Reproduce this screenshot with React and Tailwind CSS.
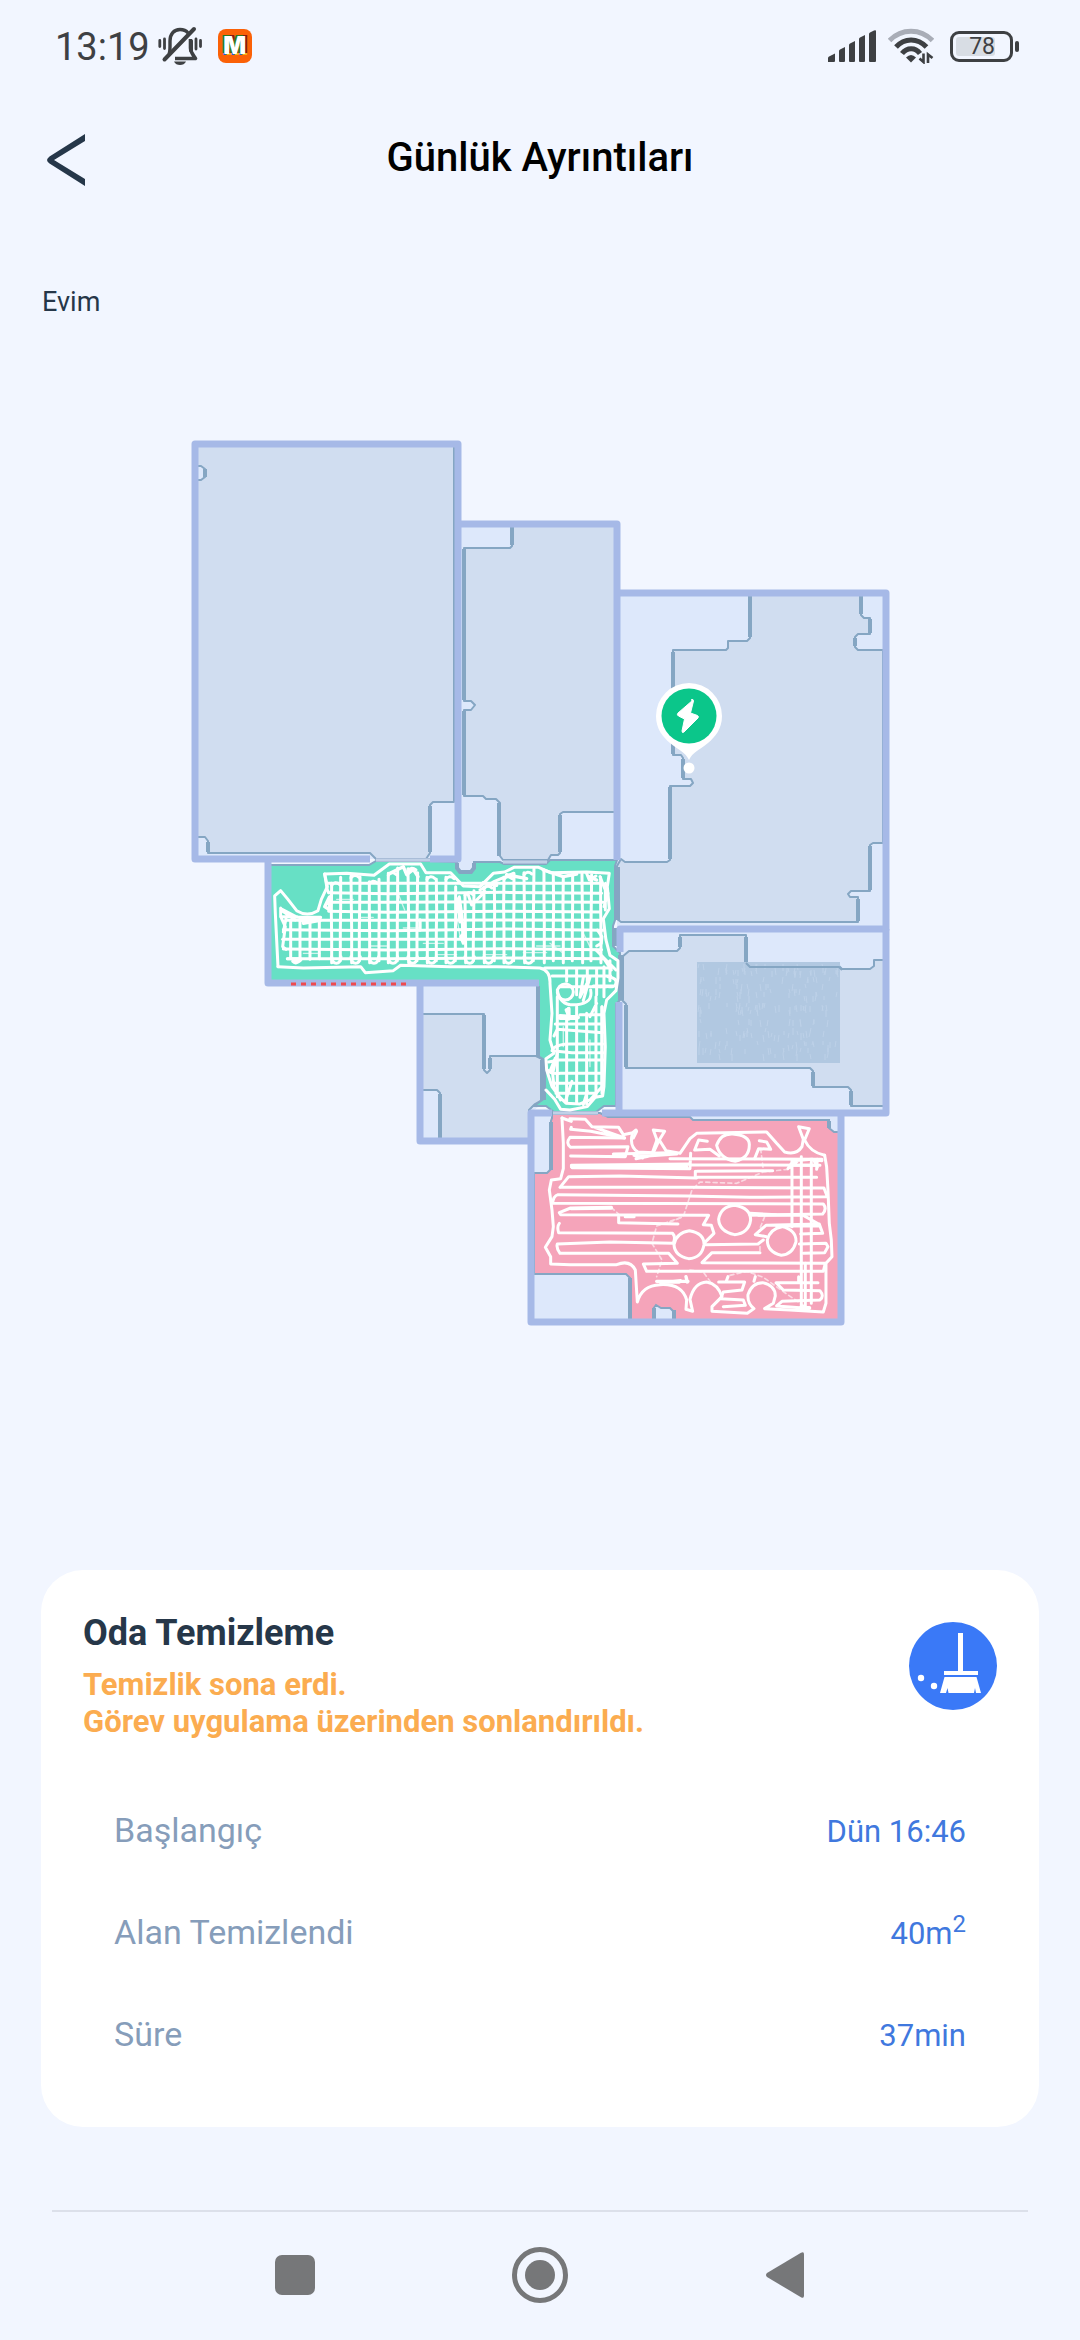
const FONT = 'font-[Roboto,sans-serif]';

const rows = [
  { label: 'Başlangıç', value: 'Dün 16:46' },
  { label: 'Alan Temizlendi', value: '40m', sup: '2' },
  { label: 'Süre', value: '37min' },
];

function MutedBellIcon() {
  return (
    <svg viewBox="0 0 44 40" className="h-10 w-11" fill="none" stroke="#3e4043" aria-hidden="true">
      <path d="M11 28C12 26 12 24 12 20v-5C12 8 16 3.500 22 3.500c4 0 6.500 1.500 8 3.500" strokeWidth="3.400" />
      <path d="M6.500 33.500L36 3" strokeWidth="4" strokeLinecap="round" />
      <path d="M32.500 13v9c0 4 2 6 5 10.500H17" strokeWidth="3.600" strokeLinejoin="round" />
      <path d="M31 15v10l4 5V14z" fill="#3e4043" stroke="none" />
      <path d="M16 35.500h12c-1 2.500-3.500 3.500-6 3.500s-5-1-6-3.500z" fill="#3e4043" stroke="none" />
      <path d="M1.800 14.500v6M6.500 13v9.500M38 13v10M42.500 14.500v6" strokeWidth="2.800" strokeLinecap="round" />
    </svg>
  );
}

function SignalIcon() {
  return (
    <svg viewBox="0 0 48 32" className="h-8 w-12" fill="#3e4043" aria-hidden="true">
      <path d="M0 32v-4q0-1 1-1.500l6-3v7.500q0 1-1 1zM11 31v-10q0-1 1-1.500l5-2.500v14q0 1-1 1h-4q-1 0-1-1zM21 31V15q0-1 1-1.500l5-2.500v20q0 1-1 1h-4q-1 0-1-1zM31 31V9q0-1 1-1.500l5-2.500v26q0 1-1 1h-4q-1 0-1-1zM41 31V4q0-1 1-1.500L46 0.500q2-.8 2 .5v30q0 1-1 1h-5q-1 0-1-1z" />
    </svg>
  );
}

function WifiIcon() {
  return (
    <svg viewBox="0 0 46 36" className="h-9 w-[46px]" fill="none" stroke="#3e4043" strokeWidth="5" aria-hidden="true">
      <path d="M1.500 12.500C13.500 0 32.500 0 44.500 12.500" stroke="#a9adb7" />
      <path d="M8 19C16.500 9.500 29.500 9.500 38.500 19" />
      <path d="M14 25.500c5-6.500 13.500-6.500 18 0" />
      <path d="M18 29.500q5-5 10 0L23 34.500z" fill="#3e4043" stroke="none" />
      <path d="M35.500 25.500v8.500l-4-3.500M40 35v-8.500l4.500 3.500" strokeWidth="2.600" />
    </svg>
  );
}

function StatusBar() {
  return (
    <header className="flex h-[92px] items-center justify-between pr-[61px] pl-[55px] text-[#3e4043]">
      <div className="flex items-center">
        <span className="pt-0.5 text-[38px] leading-[46px]">13:19</span>
        <span className="ml-2">
          <MutedBellIcon />
        </span>
        <span className="ml-4 flex h-[34px] w-[34px] items-center justify-center overflow-hidden rounded-lg bg-[#fb6107] font-[Inter,sans-serif] text-2xl leading-6 font-black text-white [text-shadow:-2px_-1px_0_#2a7a1e,2px_-1px_0_#8c1717,2px_1px_0_#f8b01c,-1px_1px_0_#2b5fc4]">
          M
        </span>
      </div>
      <div className="flex items-center">
        <SignalIcon />
        <span className="ml-3">
          <WifiIcon />
        </span>
        <span className="ml-4 flex h-[31px] w-[63px] items-center rounded-[9px] border-3 border-[#3e4043] p-[3px]">
          <span className="flex h-full w-[39px] items-center justify-end rounded-[3px] bg-[#d8dde4] pt-0.5 text-[23px] leading-5">
            78
          </span>
        </span>
        <span className="ml-0.5 h-[11px] w-1 rounded-sm bg-[#3e4043]" />
      </div>
    </header>
  );
}

const gridX = [245, 272, 303, 330, 358, 387, 415, 443, 474, 503, 531, 559, 588, 617, 645, 672, 702, 733, 762, 792, 822, 852, 882, 910, 940, 968, 996, 1025, 1052];
const gridTop = [130, 112, 108, 110, 125, 118, 100, 84, 86, 98, 112, 118, 112, 140, 160, 152, 140, 128, 112, 100, 98, 86, 90, 105, 112, 104, 102, 104, 112];
const gridY = [130, 158, 187, 214, 241, 269, 298, 327, 356];
const gridLeft = [232, 236, 240, 236, 108, 100, 98, 100, 112];

function GridPath() {
  return (
    <g transform="translate(250 840) scale(.3333)" fill="none" stroke="#fff" strokeWidth="9" strokeLinejoin="round" strokeLinecap="round">
      {gridX.map((x, i) => (
        <path key={x} d={`M${x} ${gridTop[i]}l${(i % 3) - 1} 90l${1 - (i % 2) * 2} 70V${i % 2 ? 362 : 368}`} />
      ))}
      {gridX.filter((_, i) => i % 2 === 0 && i < 22).map((x, i) => (
        <path key={x} d={`M${x} 350q2 20 14 20t14 -20M${x} ${gridTop[i * 2] + 6}q10 -14 24 -2`} />
      ))}
      {gridY.map((y, i) => (
        <path key={y} d={`M${gridLeft[i]} ${y}L420 ${y + (i % 2) * 3}L760 ${y - (i % 3)}L${1050 + (i % 3) * 5} ${y + (i % 2) * 2}`} />
      ))}
      <path d="M122 240V355M150 240V362M180 232V358M208 235V356" />
      <path d="M240 170v40M236 176l4 34l-16 -10l14 -28M150 234h60M152 242h58M160 250l46 -8" strokeWidth="10" />
      <path d="M84 380L76 220L74 168L92 152L112 176L140 212Q172 232 204 212L214 178L232 140L224 102L290 100L372 106L418 72H512L528 98L602 98L640 138L690 140L730 100L764 96L792 82L866 82L902 98L1010 96L1078 100L1072 140L1078 206L1060 236L1068 300L1080 346L1104 362V414L1098 452L1070 480L1062 520L1066 620L1062 740L1058 768L1036 772L1012 800L960 810L932 808L914 778L888 750" />
      <path d="M84 380L160 384L332 380L346 398L430 392L452 376L600 380L740 380L870 384Q902 392 900 430L906 520L900 600L912 640L888 656L890 690L906 740L930 772L948 790L990 792L1020 780L1056 740V500" />
      <path d="M92 204v26l14 30l-8 60l10 8M92 206l50 26h70M92 230h50M108 236l-8 40M96 212l40 28M112 356h40l-24 8q10 12 26 -6" />
      <path d="M224 102L232 150L236 158M628 170l8 60l4 80l-8 -20l10 -12M622 176l8 70M655 165l10 30l40 -40M690 150l40 -24l60 -26" />
      <path d="M1066 130l8 30l-12 40M1050 110l16 40v60M1010 100l8 20l20 -12M1042 270l14 20l-2 20l-14 8M1038 330l60 60M1080 362v60M1058 350l26 40" />
      <path d="M884 384h200M906 408h176M930 440h140M1000 412l-10 60l30 -60l-20 70M950 384v40M980 384v80M1012 384v50M1040 384v80M1062 380v90" />
      <ellipse cx="946" cy="456" rx="24" ry="24" />
      <path d="M922 450Q930 500 980 494Q1030 490 1022 450M1074 410q28 4 24 20t-28 8l-20 2M1030 438h60" />
      <path d="M930 534h50M930 528l54 4M956 506v30M950 510l10 24" strokeWidth="12" />
      <path d="M916 552H1060M912 588l10 -20l136 10M908 626q20 -16 60 -14h90M906 632l60 6h94M896 666l30 -6h134M892 690q10 14 40 10h126M912 730h146M918 760h120" />
      <path d="M922 470V770M950 530V788M980 500V790M1010 520V792M1038 470V770M1056 500v260M1020 530l20 -40M990 524h70" />
      <path d="M922 640l-14 60l4 40l20 40M916 654l-16 40M946 784l20 -60M1000 794l12 -40" />
      <path d="M420 100l40 -20l10 24l20 -16l14 22M700 128l40 8M770 104l60 12M880 90l60 20l40 -8M1016 110l24 10M640 250v54M638 268l8 34M510 240v30" strokeWidth="10" />
      <g strokeWidth="4" opacity=".7">
        <path d="M260 178h50M330 232h40M440 150l24 60M520 310h60M620 230l12 70M700 344h70M820 338h70M900 310l40 30M1000 280l20 40M460 264h50M360 318h50M160 340h50M860 318h70M560 344h60M940 560v60M1020 600v80" />
      </g>
    </g>
  );
}

function LinePath() {
  return (
    <g transform="translate(510 1090) scale(.3333)" fill="none" stroke="#fff" strokeWidth="9" strokeLinejoin="round" strokeLinecap="round">
      <path d="M156 84L160 160V236L152 266L124 270L118 300L126 360L130 410L126 440L106 472L122 500V522L180 524H320Q360 508 376 540L382 636Q396 586 450 584Q516 580 530 630L528 658L548 664L540 628Q552 578 590 576Q624 582 636 620L606 650V664L712 670L732 656Q712 640 714 614Q726 578 758 578Q796 586 796 618L790 640L764 656L840 660L940 666L948 640V520L966 500L964 450L958 400L954 300L950 230L944 196" />
      <path d="M156 84l28 10l-4 -8l46 2l20 22l80 2l14 22l28 -6l10 -8M184 112l-2 6l60 6l102 20l-90 -32M368 128Q356 170 384 186L430 188L444 158L430 120L464 124L448 150L468 182L510 190L540 146L560 130L770 126L800 160L824 186Q860 196 876 170L880 148L866 110L898 116L884 150Q900 186 944 196" />
      <path d="M380 124l-10 20M378 206l70 -14M372 196l26 8M380 200l120 -8M440 152l-12 34" strokeWidth="9" />
      <path d="M344 144L180 142Q166 160 182 172L354 170L346 200L182 198M310 192L480 188M184 226L536 222M186 233L540 236L542 190M480 206L936 208M540 224L920 226M184 230H530" />
      <path d="M556 244V262M560 244L788 242M562 262H920M150 292L176 260L330 258L560 264M152 292L530 292L942 294L952 320L720 322L530 318L144 314Q130 318 128 340L940 342Q952 356 938 372L720 376M304 352L182 354L148 368L152 374L596 376L580 404L604 406L612 430L584 458M326 376V398L504 402M148 400Q140 410 146 428L488 430Q498 440 490 460L300 456L142 462Q138 474 150 490L476 490L502 520L400 522L410 544L940 544L946 520L576 518L606 488H750M586 464L744 462L760 450" />
      <path d="M346 380H372M184 356l120 -2M440 574h94M452 578l60 -6M528 560l4 16M468 576h40" strokeWidth="10" />
      <path d="M620 166Q632 130 668 132Q720 136 718 166Q718 204 676 214Q630 206 620 166zM674 346Q722 354 722 390Q716 430 674 434Q628 424 626 388Q632 350 674 346zM538 422Q584 430 582 464Q576 504 536 506Q494 498 492 464Q498 428 538 422zM816 410Q860 420 858 456Q848 494 814 496Q772 486 772 450Q780 416 816 410z" />
      <path d="M554 180L566 150L592 154M556 180L600 178L628 198M748 152L770 156L782 178L746 176L734 206M720 370L800 374L880 376L926 402L768 406L736 434L770 440M928 402L938 430L872 432M868 462L948 460L954 470L944 488L880 490M746 376H860M800 408H924" />
      <path d="M626 576H704L696 600L640 606L632 626L700 630L706 646L640 650M654 560l-6 16M736 560l-4 14M798 578H924M800 580L820 600L930 602Q944 618 930 630L816 634L800 648L880 654M866 560v16" />
      <path d="M846 210V410M874 200V650M904 216V640M922 208l-2 30M834 236l16 -24l56 -4l30 4M850 226h80M840 232l22 -18M886 520V656M912 212l10 20" />
      <path d="M872 654h26M878 650l16 8" strokeWidth="12" />
      <g strokeWidth="5" strokeDasharray="12 10" opacity=".6">
        <path d="M834 238L760 246L680 280L570 276L546 300L520 380L440 408L426 460L456 510L440 560" />
        <path d="M304 352L330 376M510 384L470 400M540 540L580 546L606 582M660 556L710 544L760 562L830 612L880 646M752 176L760 240M764 380L740 440M750 470v20" />
      </g>
    </g>
  );
}

const rugStreaks = Array.from({ length: 220 }, (_, i) => {
  const x = 699 + ((i * i * 7 + i * 31) % 139);
  const y = 964 + ((i * i * 3 + i * 17) % 91);
  return `M${x} ${y}l${(i % 3) - 1} ${4 + (i % 4)}`;
});

function CleaningMap() {
  return (
    <svg viewBox="180 430 720 910" className="block h-auto w-full" role="img" aria-label="Temizlik haritası">
      <g fill="#dde8fb">
        <path d="M195 444H458V859H195zM458 524H617V874H458zM617 593H886V929H617zM617 929H886V1112H617zM420 983H541V1105L531 1112V1141H420zM531 1112H841V1322H531z" />
      </g>
      <g fill="#d0ddf0" stroke="#85a6c3" strokeWidth="2" strokeLinejoin="round">
        <path d="M197 446H454V802H433L430 805V853L426 859H376L370 853H208V841L205 837H197V480H201L205 477V469L201 466H197z" />
        <path d="M512 525V546L510 548H464V701H471L475 705L471 710H464V796H483L486 799H496L500 803V856L503 860H548L551 855H558L560 853V814L563 812H615V525z" />
        <path d="M750 595V638L747 641H728V648L726 650H673V755H681L683 758V779H691L693 783L690 786H670V860L667 862H625L621 859L617 866V919L621 922H858V897H850L848 894L851 891H870V845L873 843H883V650H858L855 647V637L858 634H870V618H864L861 615V595z" />
        <path d="M884 960H874V966L870 969H842L839 966H749L746 963V935H680V948L677 951H629L622 957V1000L626 1004V1068H810L813 1071V1087H848L851 1090V1106H884z" />
        <path d="M422 1014H484V1070L487 1073L490 1070V1056H536L542 1059V1100L535 1104L529 1110V1140H440V1093L437 1090H422z" />
      </g>
      <g stroke="#85a6c3" strokeWidth="4" fill="none">
        <path d="M464 549V700M464 711V795M430 806V852M208 842V852M499 803V856M560 815V852M673 652V754M670 787V859M750 596V637M683 759V778M870 619V633M858 899V921M870 846V890M855 638V646M861 596V614M680 937V947M746 937V962M626 1005V1067M813 1072V1086M851 1091V1105M484 1015V1069M490 1058V1069M440 1094V1139M512 527V545M205 469V477" />
      </g>
      <rect x="697" y="962" width="143" height="101" fill="#b1c8e1" />
      <path d={rugStreaks.join('')} stroke="#bdd1e8" strokeWidth="1" fill="none" />
      <path d="M746 963L750 967H839L842 970" stroke="#85a6c3" strokeWidth="2" fill="none" />

      <path
        d="M270 865H369L376 861H430L457 862V868L460 872H471L474 868V862H500L504 864H546L550 860H617L615 866V920L613 926V946L620 953V1000L616 1004V1106H604L596 1112H554L546 1106H534L545 1098V1060L538 1056V985H270z"
        fill="#67e0c5"
        stroke="#85a6c3"
        strokeWidth="2"
      />
      <path
        d="M552 1113H600L608 1117H690L693 1120H829V1128L834 1132H839V1320H674V1312L670 1308H661L656 1305L653 1309V1320H630V1278L626 1274H534V1173H547L551 1169V1121L552 1118z"
        fill="#f5a4ba"
        stroke="#85a6c3"
        strokeWidth="2"
      />
      <path d="M617 867V920M621 955V1000M543 1060V1100" stroke="#85a6c3" strokeWidth="6" fill="none" />
      <path d="M457 863V868L460 872H471L474 868V863M538 986V1056M615 928V946M551 1122V1170M630 1278V1319M654 1308V1319M674 1310V1319M829 1121V1128" stroke="#85a6c3" strokeWidth="4" fill="none" />

      <g fill="none" stroke="#a6b9e7" strokeWidth="7" strokeLinejoin="round">
        <path d="M370 859H195V444H458V859H430" />
        <path d="M458 524H617V860" />
        <path d="M617 593H886V929H620V952" />
        <path d="M886 929V1113H602" />
        <path d="M268 860V983H539" />
        <path d="M420 983V1141H530" />
        <path d="M552 1113H531V1322H841V1113" />
        <path d="M619 1002V1112" />
      </g>
      <path d="M376 860H430M503 862H547M553 1113H598" stroke="#a9bdd8" strokeWidth="4" fill="none" />
      <path d="M376 860H430M503 862H547M553 1113H598" stroke="#d8e4f6" strokeWidth="1" fill="none" />
      <path d="M291 984H408" stroke="#ef4a4f" strokeWidth="3" strokeDasharray="5 5" />

      <GridPath />
      <LinePath />

      <path d="M689 683a33 33 0 0 1 33 33c0 13-7 21-14 27c-10 8-15 9-19 17c-4-8-9-9-19-17c-7-6-14-14-14-27a33 33 0 0 1 33-33z" fill="#fff" />
      <circle cx="689" cy="716" r="27.500" fill="#0bc68a" />
      <path d="M693 700L678 713q-1.500 2 .5 3l6 3l-2.500 12q0 2.500 2 1l14-14q1-2-.5-2.500l-7-2.500l3-12q0-2.500-2.500-1z" fill="#fff" stroke="#fff" strokeWidth="1" strokeLinejoin="round" />
      <circle cx="689" cy="768" r="5.500" fill="#fff" />
    </svg>
  );
}

function BroomIcon() {
  return (
    <svg viewBox="0 0 88 88" className="mt-2.5 size-[88px] shrink-0" aria-hidden="true">
      <circle cx="44" cy="44" r="44" fill="#3a79f7" />
      <path d="M49 11h5v38h15v4H35v-4h14zM35.500 55h32l4.500 16h-5l-1-5l-1 5H39.500l-1-5l-1.500 5h-6z" fill="#fff" />
      <circle cx="12" cy="56" r="3.200" fill="#fff" />
      <circle cx="25" cy="64" r="3.200" fill="#fff" />
    </svg>
  );
}

function SummaryCard() {
  return (
    <section className="mx-[41px] rounded-[42px] bg-white p-[42px]">
      <div className="flex items-start justify-between">
        <div>
          <h2 className="text-[36px] leading-[42px] font-bold text-[#263749]">Oda Temizleme</h2>
          <p className="mt-3 text-[31px] leading-[37px] font-bold text-[#fbac50]">
            Temizlik sona erdi.
            <br />
            Görev uygulama üzerinden sonlandırıldı.
          </p>
        </div>
        <BroomIcon />
      </div>
      <dl className="mt-[39px] px-[31px]">
        {rows.map((row) => (
          <div key={row.label} className="flex h-[102px] items-center justify-between">
            <dt className="text-[34px] leading-10 text-[#869dba]">{row.label}</dt>
            <dd className="pt-1 text-[31px] leading-10 text-[#4078de]">
              {row.value}
              {row.sup && <sup className="text-2xl leading-none">{row.sup}</sup>}
            </dd>
          </div>
        ))}
      </dl>
    </section>
  );
}

function SystemNav() {
  return (
    <nav className="grid h-32 grid-cols-3 place-items-center px-[16%] pb-0.5 text-[#767779]">
      <button type="button" aria-label="Son uygulamalar" className="size-10 rounded-[7px] bg-[#767779]" />
      <button type="button" aria-label="Ana ekran" className="flex size-14 items-center justify-center rounded-full border-5 border-[#767779]">
        <span className="size-[30px] rounded-full bg-[#767779]" />
      </button>
      <button type="button" aria-label="Geri">
        <svg viewBox="0 0 38 46" className="h-[46px] w-[38px]" fill="currentColor" aria-hidden="true">
          <path d="M1 21L35 .8q3-1.500 3 1.500v41.500q0 3-3 1.500L1 25q-2-2 0-4z" />
        </svg>
      </button>
    </nav>
  );
}

export default function App() {
  return (
    <div className={`flex min-h-screen flex-col bg-[#f2f6ff] ${FONT}`}>
      <StatusBar />
      <div className="grid h-[132px] grid-cols-[1fr_auto_1fr] items-center px-[47px]">
        <button type="button" aria-label="Geri" className="justify-self-start pt-1">
          <svg viewBox="0 0 38 52" className="h-[52px] w-[38px]" fill="#263749" aria-hidden="true">
            <path d="M38 0v7L7 26L38 45v7L2.500 29.500Q0 27.500 0 26T2.500 22.500z" />
          </svg>
        </button>
        <h1 className="text-[40px] leading-[48px] font-medium text-black">Günlük Ayrıntıları</h1>
      </div>
      <main className="flex flex-1 flex-col">
        <p className="mt-[60px] px-[42px] text-[27px] leading-9 text-[#263749]">Evim</p>
        <div className="mx-auto mt-[110px] mb-auto w-2/3">
          <CleaningMap />
        </div>
        <SummaryCard />
      </main>
      <div className="mx-[52px] mt-[83px] h-0.5 bg-[#dce0ea]" />
      <SystemNav />
    </div>
  );
}
